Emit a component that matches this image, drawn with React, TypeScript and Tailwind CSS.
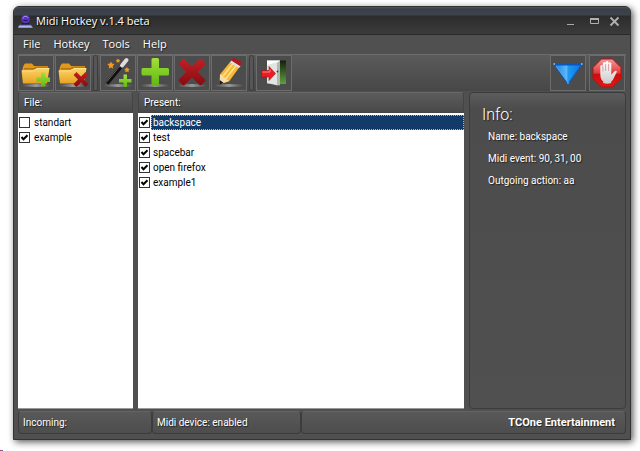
import { useState } from "react";
import type { ReactNode } from "react";

const menus = ["File", "Hotkey", "Tools", "Help"];

const files = [
  { name: "standart", on: false },
  { name: "example", on: true },
];

const presets = ["backspace", "test", "spacebar", "open firefox", "example1"];

function Defs() {
  return (
    <svg width="0" height="0" className="absolute" aria-hidden="true">
      <defs>
        <linearGradient id="folder" x1="0" y1="0" x2="0" y2="1">
          <stop offset="0" stopColor="#fbd767" />
          <stop offset="1" stopColor="#e9a220" />
        </linearGradient>
        <linearGradient id="green" x1="0" y1="0" x2="0" y2="1">
          <stop offset="0" stopColor="#a2e038" />
          <stop offset="1" stopColor="#5fb814" />
        </linearGradient>
        <linearGradient id="red" x1="0" y1="0" x2="0" y2="1">
          <stop offset="0" stopColor="#c22026" />
          <stop offset="1" stopColor="#850c10" />
        </linearGradient>
        <linearGradient id="stop" x1="0" y1="0" x2="0" y2="1">
          <stop offset="0" stopColor="#f59a9a" />
          <stop offset="0.5" stopColor="#e23a3a" />
          <stop offset="0.55" stopColor="#cf0d0d" />
          <stop offset="1" stopColor="#e51515" />
        </linearGradient>
        <linearGradient id="blue" x1="0" y1="0" x2="1" y2="0">
          <stop offset="0" stopColor="#1a7ee0" />
          <stop offset="0.45" stopColor="#5cb8f8" />
          <stop offset="0.5" stopColor="#1c9bf2" />
          <stop offset="1" stopColor="#1272dc" />
        </linearGradient>
        <linearGradient id="hand" x1="0" y1="0" x2="0" y2="1">
          <stop offset="0" stopColor="#ffffff" />
          <stop offset="1" stopColor="#c9c9c9" />
        </linearGradient>
        <linearGradient id="door" x1="0" y1="0" x2="0" y2="1">
          <stop offset="0" stopColor="#12200c" />
          <stop offset="1" stopColor="#5fa040" />
        </linearGradient>
        <linearGradient id="shade" x1="0" y1="0" x2="1" y2="0">
          <stop offset="0" stopColor="#999" stopOpacity="0" />
          <stop offset="0.5" stopColor="#999" />
          <stop offset="1" stopColor="#999" stopOpacity="0" />
        </linearGradient>
      </defs>
    </svg>
  );
}

function Icon({ children }: { children: ReactNode }) {
  return (
    <svg viewBox="0 0 32 32" width="32" height="32" aria-hidden="true">
      {children}
    </svg>
  );
}

function Ground() {
  return <ellipse cx="16" cy="28.5" rx="15" ry="1.4" fill="url(#shade)" />;
}

function Folder() {
  return (
    <>
      <Ground />
      <path d="M3.500 8.500 5 6.500H12l2 2.500h14V12L26.500 26H3L2.500 12Z" fill="#e39a1c" />
      <path d="M4 11h9.500l3-1.500H28v3H4Z" fill="#b8720e" />
      <path d="M1.500 13.500h11.500l4-2.500H29.500L27 26.500H3Z" fill="url(#folder)" />
      <path d="M2 13.900h11.200l4-2.500H29" fill="none" stroke="#ffeaa0" strokeWidth=".8" />
    </>
  );
}

const AddFolder = (
  <Icon>
    <Folder />
    <path d="M21 15.500h4.500v5H30v4.500h-4.500v4.500H21V25h-4.500v-4.500H21Z" fill="url(#green)" />
  </Icon>
);

const DeleteFolder = (
  <Icon>
    <Folder />
    <path d="m16.500 18 3-3 4.500 4.500 4.500-4.500 3 3-4.500 4.500 4.500 4.500-3 3-4.500-4.500-4.500 4.500-3-3 4.500-4.500Z" fill="url(#red)" />
  </Icon>
);

const Wand = (
  <Icon>
    <Ground />
    <path d="m5 26.500 15-18" stroke="#101010" strokeWidth="3.600" />
    <path d="m4.300 25.400 14.500-17.500" stroke="#777" strokeWidth=".8" />
    <path d="m20 8.500 4.500-5.500" stroke="#dedede" strokeWidth="4" strokeLinecap="round" />
    <path d="m9 4.500 1 2.100 2.400.5-1.600 1.900.3 2.400-2.100-1-2.200 1 .3-2.400-1.700-1.900 2.500-.5ZM16 1.500l.8 1.300 1.500.3-1 1.100.1 1.500-1.400-.6-1.500.6.200-1.500-1-1.100 1.500-.3ZM25 10l.9 1.600 1.800.4-1.200 1.400.2 1.800-1.700-.7-1.700.7.200-1.800-1.200-1.400 1.800-.4Z" fill="#f39a1c" />
    <path d="M21.500 17.500h3.500v4.500h4.500v3.500H25V30h-3.500v-4.500H17V22h4.500Z" fill="url(#green)" />
  </Icon>
);

const Plus = (
  <Icon>
    <Ground />
    <path
      d="M12.500 2.500q0-1.500 1.500-1.500h4.500q1.500 0 1.500 1.500V11h8.500q1.500 0 1.500 1.500V17q0 1.500-1.500 1.500H20V27q0 1.500-1.500 1.500H14q-1.500 0-1.500-1.500v-8.500H4q-1.500 0-1.500-1.500v-4.500Q2.500 11 4 11h8.500Z"
      fill="url(#green)"
    />
  </Icon>
);

const Cross = (
  <Icon>
    <Ground />
    <path
      d="m3 6 3.500-3.800q1-1 2 0L16 9.500l7.500-7.300q1-1 2 0L29 6q.9 1 0 2l-7.200 7 7.200 7.200q.9 1 0 2L25.500 28q-1 .9-2 0L16 20.500 8.500 28q-1 .9-2 0L3 24.200q-.9-1 0-2L10.200 15 3 8q-.9-1 0-2Z"
      fill="url(#red)"
    />
  </Icon>
);

const Pencil = (
  <Icon>
    <Ground />
    <path d="m7 17.500 10.500-13 9 5.500L16 24.500 7 27Z" fill="#f6b93b" />
    <path d="m10 19 10.500-13M13 21.500l10.500-13.500" stroke="#ffe08a" strokeWidth="1.500" />
    <path d="m7 17.500 2.500.8 1 2 2.500.4.800 2 2.200 1-9.500 3.800Z" fill="#f6ddac" />
    <path d="m6.700 23 3.800 2.800L6.300 28Z" fill="#171717" />
    <path d="m17 5.500 1.500-2 9 5.500-1.500 2Z" fill="#dedede" />
    <path d="m18.500 3.500 1.500-2q.8-.8 2-.2l5.800 3.500q1.200 1 .4 2L27 9Z" fill="#b4161b" />
  </Icon>
);

const Exit = (
  <Icon>
    <path d="M9 3.500h19V27H9Z" fill="url(#door)" />
    <path d="M9 3.500h13L20 28.500 9 26Z" fill="#e1e4e0" />
    <path d="M9 3.500h13v1L9 8Z" fill="#fff" />
    <path d="M22 3.500v25l-3-.7V6Z" fill="#b2b8b0" />
    <circle cx="19.500" cy="14.500" r="1" fill="#444" />
    <path d="M3.500 13.500H11V9.500l6.500 7-6.500 7V20H3.500Z" fill="#ec1c24" stroke="#9a1015" strokeWidth=".6" />
    <path d="M4.500 15h7.500v-2.500" fill="none" stroke="#ff8286" strokeWidth="1" />
  </Icon>
);

const Triangle = (
  <Icon>
    <path d="M2 7h28L16 27Z" fill="url(#blue)" stroke="#0c5cc4" strokeWidth="1.200" />
    <path d="M3 7.500h26" stroke="#0b55bd" strokeWidth="2" />
    <path d="M4 9 15.500 25" stroke="#55aef5" strokeWidth="1" />
    <path d="M1.500 7h1.500M29 7h1.500M15.500 26h1" stroke="#8fccfa" strokeWidth="1.500" />
  </Icon>
);

const Stop = (
  <Icon>
    <path d="M10.500 2h11L30 10.500v11L21.500 30h-11L2 21.500v-11Z" fill="url(#stop)" stroke="#b81010" />
    <path
      d="M9.300 17V9q1.300-1.800 2.600 0v5.500V6q1.400-1.800 2.700 0v8V4.800q1.500-1.800 2.900 0V14l.1-8q1.500-1.600 2.700.2V17.500l3.200-3.300q1.500-1 2.500.3L22.800 21q-.6 2.500-2.600 3.500V26q-4 1.500-8 0v-1.500q-2.900-2-2.900-7.500Z"
      fill="url(#hand)"
    />
    <path d="M11.900 9v5.500M14.600 7v7M17.600 7v7" stroke="#cf6a6a" strokeWidth=".6" />
  </Icon>
);

const fileTools = [
  { label: "Add file", icon: AddFolder },
  { label: "Delete file", icon: DeleteFolder },
];

const hotkeyTools = [
  { label: "Wizard", icon: Wand },
  { label: "Add hotkey", icon: Plus },
  { label: "Delete hotkey", icon: Cross },
  { label: "Edit hotkey", icon: Pencil },
];

function ToolButton({ label, icon }: { label: string; icon: ReactNode }) {
  return (
    <button
      aria-label={label}
      className="flex size-9 items-center justify-center border border-[#6c6c6c] bg-[#4c4c4c]"
    >
      {icon}
    </button>
  );
}

function Separator() {
  return <div className="h-9 w-[5px] rounded-sm border border-[#3c3c3c] bg-[#565656]" />;
}

function Check({ id, checked }: { id: string; checked: boolean }) {
  return (
    <span className="relative flex size-[11px] shrink-0">
      <input
        id={id}
        type="checkbox"
        defaultChecked={checked}
        className="peer size-full appearance-none border border-[#333] bg-white"
      />
      <svg
        viewBox="0 0 11 11"
        className="pointer-events-none absolute inset-0 hidden size-full peer-checked:block"
        aria-hidden="true"
      >
        <path d="M2.500 5 4.500 7.300 8.500 3.300" fill="none" stroke="#000" strokeWidth="2" />
      </svg>
    </span>
  );
}

function PanelHeader({ children }: { children: ReactNode }) {
  return (
    <h2 className="h-[21px] rounded-t-sm border border-[#444] border-t-[#686868] bg-linear-to-b from-[#5c5c5c] to-[#494949] px-[5px] leading-5 text-white text-shadow-[1px_1px_1px_#222]">
      {children}
    </h2>
  );
}

function StatusCell({ children, className }: { children?: ReactNode; className: string }) {
  return (
    <div
      className={`h-[23px] rounded-sm border border-[#3c3c3c] border-t-[#646464] bg-linear-to-b from-[#595959] to-[#4d4d4d] px-1 leading-[22px] ${className}`}
    >
      {children}
    </div>
  );
}

export default function App() {
  const [selected, setSelected] = useState("backspace");

  return (
    <div className="relative flex min-h-screen flex-col bg-white pt-1.5 pr-[9px] pb-[11px] pl-[13px] font-[Roboto,sans-serif] text-[10px]">
      <Defs />
      <div className="flex flex-1 flex-col rounded-t-md border border-[#333] bg-[#505050] shadow-[2px_2px_7px_#555]">
        <header className="flex h-[28px] items-center rounded-t-md border-b border-[#292929] bg-[linear-gradient(#505257_0,#3a3f49_2px,#3d424b_8px,#2c2c2c_9px,#3b3b3b_100%)] pt-0.5 pr-[10px] pl-1">
          <svg viewBox="0 0 16 16" className="size-4" aria-hidden="true">
            <path d="M3 9.500h8.500l3 3H1Z" fill="#4a4f8c" />
            <path d="M1 11.500h12l2 2.300H0Z" fill="#a9b5ee" />
            <path d="M4 9h7l1 1.500H3Z" fill="#1d1838" />
            <circle cx="7.500" cy="5" r="4.300" fill="#5b35bd" />
            <path d="M4.800 4.500 6 2.500h3l1.200 1.500" stroke="#a184ee" fill="none" />
            <path d="M5.500 6.500h4" stroke="#2a1670" strokeWidth="1.200" />
          </svg>
          <h1 className="ml-[2px] flex-1 font-['Open_Sans',sans-serif] text-[11px] font-normal text-white text-shadow-[1px_1px_1px_#000]">
            Midi Hotkey v.1.4 beta
          </h1>
          <div className="flex items-center gap-3">
            <button aria-label="Minimize" className="flex size-3 items-center justify-center">
              <svg viewBox="0 0 12 12" className="size-full"><path d="M3 8.500h7" stroke="#aaa" /></svg>
            </button>
            <button aria-label="Maximize" className="flex size-3 items-center justify-center">
              <svg viewBox="0 0 12 12" className="size-full">
                <path d="M2.500 3v4.500h8V3M2 2.500h9" fill="none" stroke="#b0b0b0" />
                <path d="M2 3h9" stroke="#b0b0b0" strokeWidth="2" />
              </svg>
            </button>
            <button aria-label="Close" className="-ml-1 flex size-3 items-center justify-center">
              <svg viewBox="0 0 12 12" className="size-full"><path d="m2.500 1.500 8 8M10.500 1.500l-8 8" stroke="#b0b0b0" strokeWidth="1.800" /></svg>
            </button>
          </div>
        </header>

        <nav className="flex h-[19px] items-center gap-[13px] px-[9px] font-['Open_Sans',sans-serif] text-[11px] font-medium text-white">
          {menus.map((menu) => (
            <button key={menu} className="text-shadow-[1px_1px_1px_#222]">
              {menu}
            </button>
          ))}
        </nav>

        <div className="mx-1 flex items-center justify-between border-t border-[#6b6b6b] bg-linear-to-b from-[#5b5b5b] to-[#474747] pr-px">
          <div className="flex items-center gap-0.5">
            <div className="flex gap-px">
              {fileTools.map((tool) => (
                <ToolButton key={tool.label} {...tool} />
              ))}
            </div>
            <Separator />
            <div className="flex gap-px">
              {hotkeyTools.map((tool) => (
                <ToolButton key={tool.label} {...tool} />
              ))}
            </div>
            <Separator />
            <ToolButton label="Exit" icon={Exit} />
          </div>
          <div className="flex gap-[3px]">
            <ToolButton label="Hide to tray" icon={Triangle} />
            <ToolButton label="Stop" icon={Stop} />
          </div>
        </div>

        <main className="mx-1 mt-px flex flex-1 gap-[5px]">
          <section className="flex w-[115px] flex-col">
            <PanelHeader>File:</PanelHeader>
            <ul className="flex-1 border-b border-[#999] bg-white pt-[2px]">
              {files.map((file) => (
                <li key={file.name} className="flex h-[15px] items-center gap-1 px-px">
                  <Check id={file.name} checked={file.on} />
                  <label htmlFor={file.name}>{file.name}</label>
                </li>
              ))}
            </ul>
          </section>

          <section className="flex flex-1 flex-col">
            <PanelHeader>Present:</PanelHeader>
            <ul className="flex-1 border-b border-[#999] bg-white pt-[2px]">
              {presets.map((name) => (
                <li key={name} className="flex h-[15px] items-center gap-px pl-px">
                  <Check id={name} checked />
                  <label
                    htmlFor={name}
                    onClick={() => setSelected(name)}
                    className={
                      name === selected
                        ? "h-[15px] flex-1 border border-dotted border-[#c8ad8e] bg-[#133b69] px-px leading-[13px] text-white"
                        : "h-[15px] flex-1 border border-transparent px-px leading-[13px] text-black"
                    }
                  >
                    {name}
                  </label>
                </li>
              ))}
            </ul>
          </section>

          <aside className="w-[157px] rounded-sm border border-[#3c3c3c] bg-[linear-gradient(#5c5c5c_0,#4c4c4c_16px,#505050_100%)] px-3 pt-3 text-white text-shadow-[1px_1px_1px_#222]">
            <h2 className="text-base leading-5 font-light">Info:</h2>
            <div className="mt-1 flex flex-col gap-[6px] pl-[6px] leading-4">
              <p>Name: {selected}</p>
              <p>Midi event: 90, 31, 00</p>
              <p>Outgoing action: aa</p>
            </div>
          </aside>
        </main>

        <footer className="mx-1 mt-0.5 mb-[5px] flex text-white text-shadow-[1px_1px_1px_#222]">
          <StatusCell className="w-[134px]">Incoming:</StatusCell>
          <StatusCell className="w-[149px]">Midi device: enabled</StatusCell>
          <StatusCell className="flex-1 pr-[10px] text-right text-[11px] font-bold">
            TCOne Entertainment
          </StatusCell>
        </footer>
      </div>
      <div className="absolute bottom-0 left-0 h-px w-[3px] bg-linear-to-r from-red-600 to-blue-600" />
    </div>
  );
}
